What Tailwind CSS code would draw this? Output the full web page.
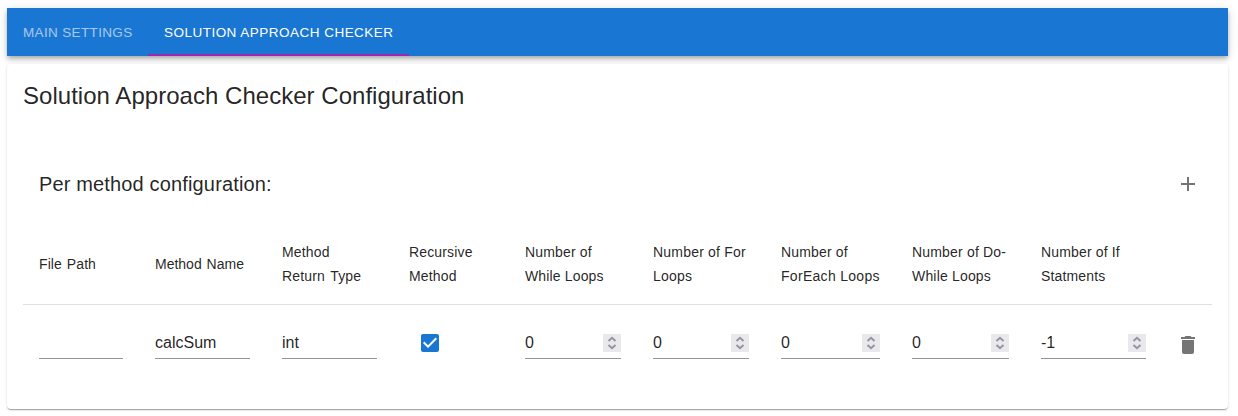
<!DOCTYPE html>
<html lang="en">
<head>
<meta charset="utf-8">
<title>Solution Approach Checker</title>
<script src="https://cdn.jsdelivr.net/npm/@tailwindcss/browser@4"></script>
</head>
<body class="h-[416px] overflow-hidden bg-white pt-2 pl-[7px] font-['Liberation_Sans',Arial,sans-serif] text-black/87">
<svg class="hidden">
  <symbol id="spin" viewBox="0 0 18 18"><path d="M5.5 6.9 9 3.8l3.5 3.1M5.5 11.1 9 14.2l3.5-3.1" fill="none" stroke="#9494a0" stroke-width="2"/></symbol>
</svg>
<header class="flex h-12 w-[1221px] bg-[#1976d2] text-[13.5px] leading-[17.5px] text-white shadow-[0_2px_4px_-1px_rgba(0,0,0,0.2),0_4px_5px_0_rgba(0,0,0,0.14),0_1px_10px_0_rgba(0,0,0,0.12)]">
  <div class="flex w-[141px] items-center whitespace-nowrap pt-px pl-4 tracking-[0.35px] opacity-60">MAIN SETTINGS</div>
  <div class="flex w-[261px] items-center whitespace-nowrap border-b-2 border-[#9c27b0] pt-[3px] pl-4 tracking-[0.48px]">SOLUTION APPROACH CHECKER</div>
</header>
<main class="mt-2 h-[345px] w-[1221px] rounded bg-white px-4 pt-4 shadow-[0_2px_1px_-1px_rgba(0,0,0,0.2),0_1px_1px_0_rgba(0,0,0,0.14),0_1px_3px_0_rgba(0,0,0,0.12)]">
  <h1 class="text-2xl leading-8 tracking-[0.03px]">Solution Approach Checker Configuration</h1>
  <div class="mt-10 flex h-16 items-center justify-between pr-3 pl-4">
    <h2 class="text-xl leading-8 tracking-[0.15px]">Per method configuration:</h2>
    <svg class="h-6 w-6" viewBox="0 0 24 24" fill="#757575"><path d="M19 13h-6v6h-2v-6H5v-2h6V5h2v6h6v2z"/></svg>
  </div>
  <div class="mt-2 grid h-[81px] grid-cols-[116px_127px_127px_116px_128px_128px_131px_129px_137px_50px] items-center border-b border-[#e0e0e0] text-sm leading-6 tracking-[0.15px] whitespace-nowrap *:pl-4">
    <div class="tracking-[0.08px] [word-spacing:1px]">File Path</div>
    <div class="tracking-[0px] [word-spacing:1px]">Method Name</div>
    <div class="[word-spacing:1.5px]">Method<br>Return Type</div>
    <div>Recursive<br>Method</div>
    <div>Number of<br>While Loops</div>
    <div class="tracking-[0.2px]">Number of For<br>Loops</div>
    <div>Number of<br><span class="tracking-[0.3px]">ForEach Loops</span></div>
    <div class="tracking-[0.18px]">Number of Do-<br>While Loops</div>
    <div>Number of If<br>Statments</div>
    <div></div>
  </div>
  <div class="grid grid-cols-[116px_127px_127px_116px_128px_128px_131px_129px_137px_50px] pt-[22px] text-base leading-8 *:h-8">
    <div class="mx-4 border-b border-[#949494]"></div>
    <div class="mx-4 border-b border-[#949494]">calcSum</div>
    <div class="mx-4 border-b border-[#949494]">int</div>
    <div class="flex items-center pl-[25px]"><svg class="h-6 w-6" viewBox="0 0 24 24" fill="#1976d2"><path d="M19 3H5c-1.11 0-2 .9-2 2v14c0 1.1.89 2 2 2h14c1.11 0 2-.9 2-2V5c0-1.1-.89-2-2-2zm-9 14l-5-5 1.41-1.41L10 14.17l7.59-7.59L19 8l-9 9z"/></svg></div>
    <div class="mx-4 flex justify-between border-b border-[#949494]">0<svg class="mt-[7px] h-[18px] w-[18px] bg-[#e9e9ed]"><use href="#spin"/></svg></div>
    <div class="mx-4 flex justify-between border-b border-[#949494]">0<svg class="mt-[7px] h-[18px] w-[18px] bg-[#e9e9ed]"><use href="#spin"/></svg></div>
    <div class="mx-4 flex justify-between border-b border-[#949494]">0<svg class="mt-[7px] h-[18px] w-[18px] bg-[#e9e9ed]"><use href="#spin"/></svg></div>
    <div class="mx-4 flex justify-between border-b border-[#949494]">0<svg class="mt-[7px] h-[18px] w-[18px] bg-[#e9e9ed]"><use href="#spin"/></svg></div>
    <div class="mx-4 flex justify-between border-b border-[#949494]">-1<svg class="mt-[7px] h-[18px] w-[18px] bg-[#e9e9ed]"><use href="#spin"/></svg></div>
    <div class="flex items-center pt-1 pl-3.5"><svg class="h-6 w-6" viewBox="0 0 24 24" fill="#757575"><path d="M6 19c0 1.1.9 2 2 2h8c1.1 0 2-.9 2-2V7H6v12zM19 4h-3.5l-1-1h-5l-1 1H5v2h14V4z"/></svg></div>
  </div>
</main>
</body>
</html>
